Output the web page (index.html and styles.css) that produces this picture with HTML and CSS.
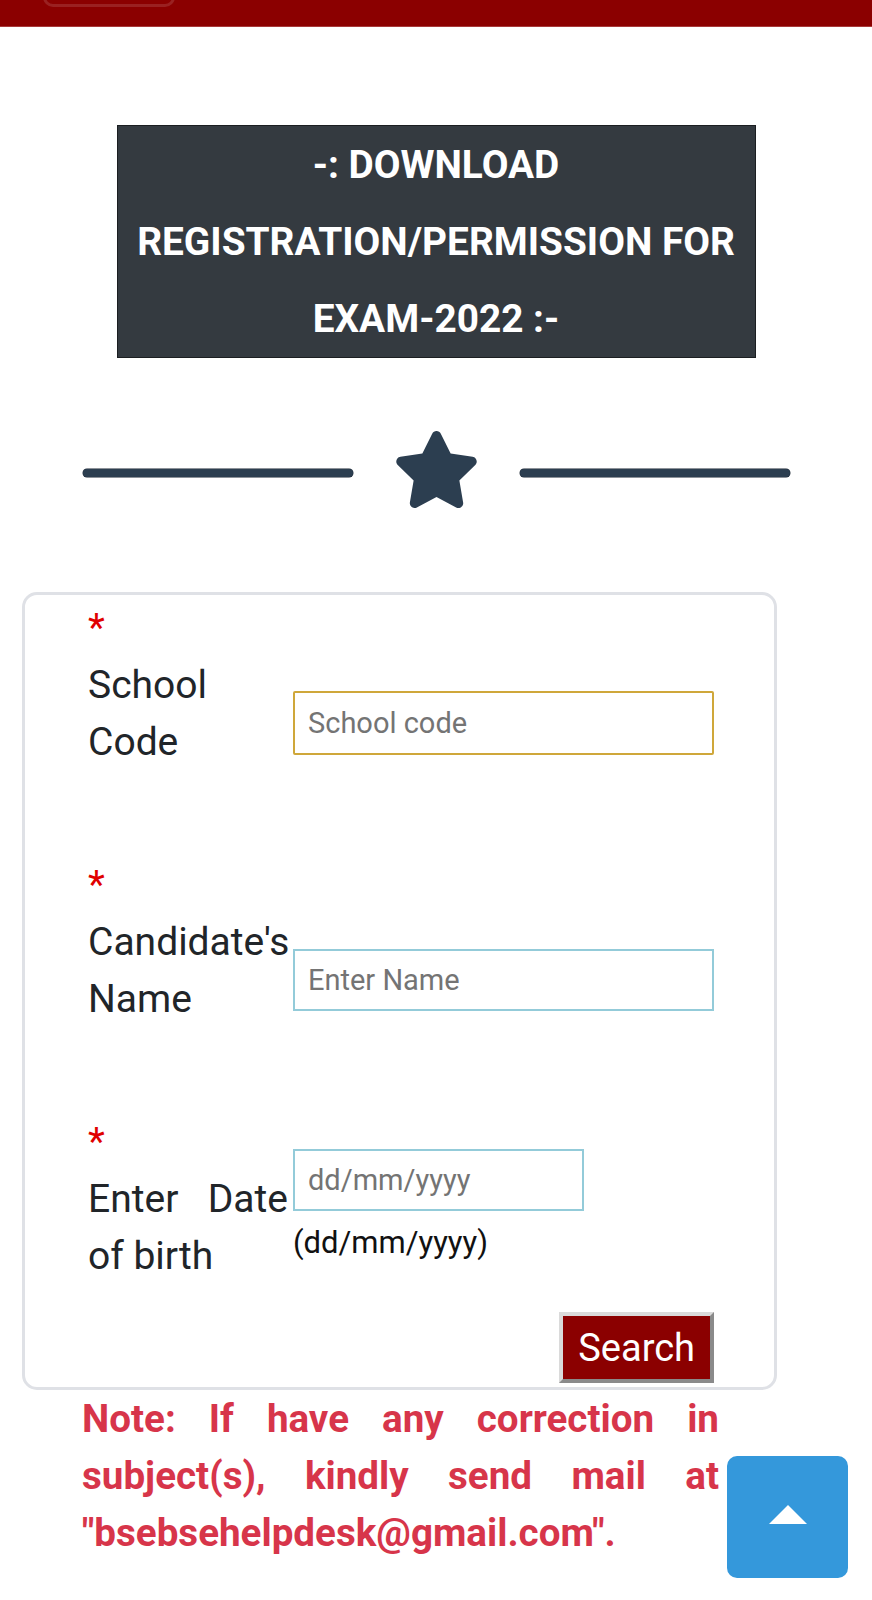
FILE: index.html
```html
<!DOCTYPE html>
<html>

<head>
	<title>Download Registration / Permission for Exam-2022</title>
	<meta charset="UTF-8" />

	<link rel="stylesheet" href="styles.css">
</head>

<body>

<div class="navbar">
	<span class="toggler"></span>
</div>

<div class="title-box">-: DOWNLOAD REGISTRATION/PERMISSION FOR EXAM-2022 :-</div>

<div class="divider">
	<span class="divider-line"></span>
	<svg class="divider-star" viewBox="0 0 576 512" width="87" height="77">
		<path fill="#2c3e50" d="M259.3 17.8L194 150.2 47.9 171.5c-26.2 3.8-36.7 36.1-17.7 54.6l105.7 103-25 145.5c-4.5 26.3 23.2 46 46.4 33.7L288 439.6l130.7 68.7c23.2 12.2 50.9-7.4 46.4-33.7l-25-145.5 105.7-103c19-18.5 8.5-50.8-17.7-54.6L382 150.2 316.7 17.8c-11.7-23.6-45.6-23.9-57.4 0z" />
	</svg>
	<span class="divider-line"></span>
</div>

<form class="card" onsubmit="return false">
	<div class="row">
		<label class="label" for="schoolCode"><span class="req">*</span><br />School Code</label>
		<div class="field">
			<input id="schoolCode" class="input input-focus" type="text" placeholder="School code" />
		</div>
	</div>

	<div class="row">
		<label class="label" for="name"><span class="req">*</span><br />Candidate's Name</label>
		<div class="field">
			<input id="name" class="input" type="text" placeholder="Enter Name" />
		</div>
	</div>

	<div class="row row-last">
		<label class="label" for="dob"><span class="req">*</span><br />Enter Date of birth</label>
		<div class="field field-date">
			<input id="dob" class="input input-date" type="text" placeholder="dd/mm/yyyy" />
			<div class="hint">(dd/mm/yyyy)</div>
		</div>
	</div>

	<div class="actions">
		<button class="search" type="submit">Search</button>
	</div>
</form>

<p class="note">Note: If have any correction in subject(s), kindly send mail at "bsebsehelpdesk@gmail.com".</p>

<a class="to-top" href="#"><span class="to-top-arrow"></span></a>

</body>

</html>
```

FILE: styles.css
```css
body {
  margin: 0;
  font-family: Roboto, "Liberation Sans", sans-serif;
  color: #212529;
  background: #fff;
}

.navbar {
  height: 27px;
  background: #8b0000;
  overflow: hidden;
  display: flex;
  align-items: flex-start;
  border-bottom: 1px solid #a83a3a;
  box-sizing: border-box;
}

.toggler {
  display: block;
  width: 132px;
  height: 52px;
  margin: -45px 0 0 43px;
  border: 3px solid rgba(255, 255, 255, 0.13);
  border-radius: 10px;
  box-sizing: border-box;
}

.title-box {
  width: 639px;
  box-sizing: border-box;
  margin: 98px auto 0;
  background: #343a40;
  border: 1px solid #1b1e21;
  color: #fff;
  text-align: center;
  font-size: 38.8px;
  font-weight: bold;
  line-height: 77px;
}

.divider {
  display: flex;
  justify-content: center;
  align-items: center;
  gap: 40px;
  margin-top: 73px;
}

.divider-line {
  display: block;
  width: 270px;
  height: 8px;
  margin-top: 7px;
  border-radius: 4px;
  background: #2c3e50;
  box-shadow: 0 0 0 0.5px #1a2533;
}

.divider-star {
  display: block;
}

.card {
  width: 755px;
  box-sizing: border-box;
  margin: 84px 0 0 22px;
  border: 3px solid #dfe1e6;
  border-radius: 15px;
  padding: 5px 60px 4px 63px;
}

.row {
  display: grid;
  grid-template-columns: 200px 1fr;
  column-gap: 5px;
  align-items: start;
  margin-bottom: 86px;
}

.row-last {
  margin-bottom: 0;
}

.label {
  font-size: 39px;
  line-height: 57px;
  text-align: justify;
}

.req {
  color: #e00000;
}

.field {
  padding-top: 92px;
}

.field-date {
  padding-top: 35px;
}

.input {
  display: block;
  width: 100%;
  height: 62px;
  box-sizing: border-box;
  border: 2px solid #93cbd9;
  padding: 0 13px;
  font-family: Roboto, "Liberation Sans", sans-serif;
  font-size: 29px;
  color: #212529;
  background: #fff;
  outline: none;
}

.input::placeholder {
  color: #747474;
}

.input-focus {
  height: 64px;
  margin-top: -1px;
  border-color: #cfa73a;
  border-radius: 2px;
}

.input-date {
  width: 291px;
}

.hint {
  margin-top: 9px;
  font-size: 31px;
  line-height: 46px;
  color: #111;
}

.actions {
  display: flex;
  justify-content: flex-end;
  margin-top: 27px;
}

.search {
  height: 71px;
  padding: 0 15px;
  box-sizing: border-box;
  background: #8b0000;
  color: #fff;
  font-family: Roboto, "Liberation Sans", sans-serif;
  font-size: 38px;
  line-height: 60px;
  border: 4px solid;
  border-color: #dadada #8a8a8a #8a8a8a #dadada;
  cursor: pointer;
}

.note {
  width: 637px;
  margin: 0 0 0 82px;
  color: #d7354a;
  font-size: 38.6px;
  font-weight: bold;
  line-height: 57px;
  text-align: justify;
}

.to-top {
  position: fixed;
  right: 24px;
  bottom: 22px;
  width: 121px;
  height: 122px;
  border-radius: 10px;
  background: #3498db;
  display: flex;
  align-items: center;
  justify-content: center;
}

.to-top-arrow {
  width: 0;
  height: 0;
  border-left: 19px solid transparent;
  border-right: 19px solid transparent;
  border-bottom: 19px solid #fff;
  margin-top: -6px;
}
```
